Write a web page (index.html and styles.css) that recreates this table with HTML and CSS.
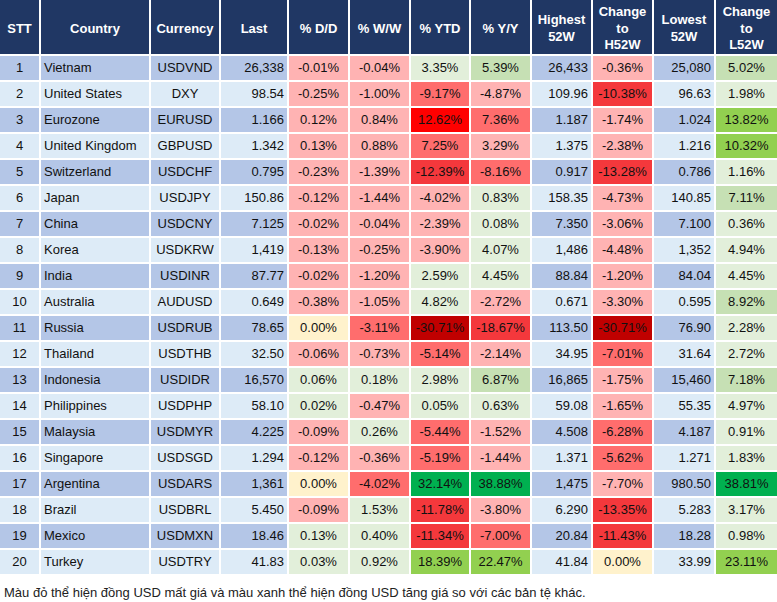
FILE: index.html
```html
<!DOCTYPE html>
<html lang="vi">
<head>
<meta charset="utf-8">
<link rel="stylesheet" href="styles.css">
</head>
<body>
<table class="fx">
<colgroup>
<col class="c-stt"><col class="c-country"><col class="c-cur"><col class="c-last">
<col class="c-dd"><col class="c-ww"><col class="c-ytd"><col class="c-yy">
<col class="c-hi"><col class="c-h52"><col class="c-lo"><col class="c-l52">
</colgroup>
<thead>
<tr>
<th>STT</th><th>Country</th><th>Currency</th><th>Last</th><th>% D/D</th><th>% W/W</th><th>% YTD</th><th>% Y/Y</th><th>Highest<br>52W</th><th>Change<br>to<br>H52W</th><th>Lowest<br>52W</th><th>Change<br>to<br>L52W</th>
</tr>
</thead>
<tbody>
<tr class="odd"><td class="n">1</td><td class="t">Vietnam</td><td class="c">USDVND</td><td class="r">26,338</td><td class="p1">-0.01%</td><td class="p1">-0.04%</td><td class="g1">3.35%</td><td class="g2">5.39%</td><td class="r">26,433</td><td class="p1">-0.36%</td><td class="r">25,080</td><td class="g2">5.02%</td></tr>
<tr class="even"><td class="n">2</td><td class="t">United States</td><td class="c">DXY</td><td class="r">98.54</td><td class="p1">-0.25%</td><td class="p1">-1.00%</td><td class="p2">-9.17%</td><td class="p1">-4.87%</td><td class="r">109.96</td><td class="p3">-10.38%</td><td class="r">96.63</td><td class="g1">1.98%</td></tr>
<tr class="odd"><td class="n">3</td><td class="t">Eurozone</td><td class="c">EURUSD</td><td class="r">1.166</td><td class="p1">0.12%</td><td class="p1">0.84%</td><td class="p4">12.62%</td><td class="p2">7.36%</td><td class="r">1.187</td><td class="p1">-1.74%</td><td class="r">1.024</td><td class="g3">13.82%</td></tr>
<tr class="even"><td class="n">4</td><td class="t">United Kingdom</td><td class="c">GBPUSD</td><td class="r">1.342</td><td class="p1">0.13%</td><td class="p1">0.88%</td><td class="p2">7.25%</td><td class="p1">3.29%</td><td class="r">1.375</td><td class="p1">-2.38%</td><td class="r">1.216</td><td class="g3">10.32%</td></tr>
<tr class="odd"><td class="n">5</td><td class="t">Switzerland</td><td class="c">USDCHF</td><td class="r">0.795</td><td class="p1">-0.23%</td><td class="p1">-1.39%</td><td class="p3">-12.39%</td><td class="p2">-8.16%</td><td class="r">0.917</td><td class="p3">-13.28%</td><td class="r">0.786</td><td class="g1">1.16%</td></tr>
<tr class="even"><td class="n">6</td><td class="t">Japan</td><td class="c">USDJPY</td><td class="r">150.86</td><td class="p1">-0.12%</td><td class="p1">-1.44%</td><td class="p1">-4.02%</td><td class="g1">0.83%</td><td class="r">158.35</td><td class="p1">-4.73%</td><td class="r">140.85</td><td class="g2">7.11%</td></tr>
<tr class="odd"><td class="n">7</td><td class="t">China</td><td class="c">USDCNY</td><td class="r">7.125</td><td class="p1">-0.02%</td><td class="p1">-0.04%</td><td class="p1">-2.39%</td><td class="g1">0.08%</td><td class="r">7.350</td><td class="p1">-3.06%</td><td class="r">7.100</td><td class="g1">0.36%</td></tr>
<tr class="even"><td class="n">8</td><td class="t">Korea</td><td class="c">USDKRW</td><td class="r">1,419</td><td class="p1">-0.13%</td><td class="p1">-0.25%</td><td class="p1">-3.90%</td><td class="g1">4.07%</td><td class="r">1,486</td><td class="p1">-4.48%</td><td class="r">1,352</td><td class="g1">4.94%</td></tr>
<tr class="odd"><td class="n">9</td><td class="t">India</td><td class="c">USDINR</td><td class="r">87.77</td><td class="p1">-0.02%</td><td class="p1">-1.20%</td><td class="g1">2.59%</td><td class="g1">4.45%</td><td class="r">88.84</td><td class="p1">-1.20%</td><td class="r">84.04</td><td class="g1">4.45%</td></tr>
<tr class="even"><td class="n">10</td><td class="t">Australia</td><td class="c">AUDUSD</td><td class="r">0.649</td><td class="p1">-0.38%</td><td class="p1">-1.05%</td><td class="g1">4.82%</td><td class="p1">-2.72%</td><td class="r">0.671</td><td class="p1">-3.30%</td><td class="r">0.595</td><td class="g2">8.92%</td></tr>
<tr class="odd"><td class="n">11</td><td class="t">Russia</td><td class="c">USDRUB</td><td class="r">78.65</td><td class="y">0.00%</td><td class="p2">-3.11%</td><td class="p5">-30.71%</td><td class="p3">-18.67%</td><td class="r">113.50</td><td class="p5">-30.71%</td><td class="r">76.90</td><td class="g1">2.28%</td></tr>
<tr class="even"><td class="n">12</td><td class="t">Thailand</td><td class="c">USDTHB</td><td class="r">32.50</td><td class="p1">-0.06%</td><td class="p1">-0.73%</td><td class="p2">-5.14%</td><td class="p1">-2.14%</td><td class="r">34.95</td><td class="p2">-7.01%</td><td class="r">31.64</td><td class="g1">2.72%</td></tr>
<tr class="odd"><td class="n">13</td><td class="t">Indonesia</td><td class="c">USDIDR</td><td class="r">16,570</td><td class="g1">0.06%</td><td class="g1">0.18%</td><td class="g1">2.98%</td><td class="g2">6.87%</td><td class="r">16,865</td><td class="p1">-1.75%</td><td class="r">15,460</td><td class="g2">7.18%</td></tr>
<tr class="even"><td class="n">14</td><td class="t">Philippines</td><td class="c">USDPHP</td><td class="r">58.10</td><td class="g1">0.02%</td><td class="p1">-0.47%</td><td class="g1">0.05%</td><td class="g1">0.63%</td><td class="r">59.08</td><td class="p1">-1.65%</td><td class="r">55.35</td><td class="g1">4.97%</td></tr>
<tr class="odd"><td class="n">15</td><td class="t">Malaysia</td><td class="c">USDMYR</td><td class="r">4.225</td><td class="p1">-0.09%</td><td class="g1">0.26%</td><td class="p2">-5.44%</td><td class="p1">-1.52%</td><td class="r">4.508</td><td class="p2">-6.28%</td><td class="r">4.187</td><td class="g1">0.91%</td></tr>
<tr class="even"><td class="n">16</td><td class="t">Singapore</td><td class="c">USDSGD</td><td class="r">1.294</td><td class="p1">-0.12%</td><td class="p1">-0.36%</td><td class="p2">-5.19%</td><td class="p1">-1.44%</td><td class="r">1.371</td><td class="p2">-5.62%</td><td class="r">1.271</td><td class="g1">1.83%</td></tr>
<tr class="odd"><td class="n">17</td><td class="t">Argentina</td><td class="c">USDARS</td><td class="r">1,361</td><td class="y">0.00%</td><td class="p2">-4.02%</td><td class="g4">32.14%</td><td class="g4">38.88%</td><td class="r">1,475</td><td class="p1">-7.70%</td><td class="r">980.50</td><td class="g4">38.81%</td></tr>
<tr class="even"><td class="n">18</td><td class="t">Brazil</td><td class="c">USDBRL</td><td class="r">5.450</td><td class="p1">-0.09%</td><td class="g1">1.53%</td><td class="p3">-11.78%</td><td class="p1">-3.80%</td><td class="r">6.290</td><td class="p3">-13.35%</td><td class="r">5.283</td><td class="g1">3.17%</td></tr>
<tr class="odd"><td class="n">19</td><td class="t">Mexico</td><td class="c">USDMXN</td><td class="r">18.46</td><td class="g1">0.13%</td><td class="g1">0.40%</td><td class="p3">-11.34%</td><td class="p2">-7.00%</td><td class="r">20.84</td><td class="p3">-11.43%</td><td class="r">18.28</td><td class="g1">0.98%</td></tr>
<tr class="even"><td class="n">20</td><td class="t">Turkey</td><td class="c">USDTRY</td><td class="r">41.83</td><td class="g1">0.03%</td><td class="g1">0.92%</td><td class="g3">18.39%</td><td class="g3">22.47%</td><td class="r">41.84</td><td class="y">0.00%</td><td class="r">33.99</td><td class="g3">23.11%</td></tr>
</tbody>
</table>
<p class="note">Màu đỏ thể hiện đồng USD mất giá và màu xanh thể hiện đồng USD tăng giá so với các bản tệ khác.</p>
</body>
</html>
```
FILE: styles.css
```css
html, body {
  margin: 0;
  padding: 0;
  background: #ffffff;
}
body {
  font-family: "Liberation Sans", Arial, sans-serif;
  font-size: 13px;
  color: #111111;
}
.fx {
  border-collapse: separate;
  border-spacing: 0;
  table-layout: fixed;
  width: 777px;
}
.c-stt { width: 41px; }
.c-country { width: 110px; }
.c-cur { width: 70px; }
.c-last { width: 68px; }
.c-dd { width: 61px; }
.c-ww { width: 61px; }
.c-ytd { width: 60px; }
.c-yy { width: 61px; }
.c-hi { width: 61px; }
.c-h52 { width: 61px; }
.c-lo { width: 62px; }
.c-l52 { width: 61px; }

.fx th, .fx td {
  border-right: 2px solid #ffffff;
  border-bottom: 2px solid #ffffff;
  padding: 0;
  box-sizing: border-box;
  white-space: nowrap;
  overflow: hidden;
}
.fx th:last-child, .fx td:last-child { border-right: 0; }
.fx th {
  background: #203764;
  color: #ffffff;
  font-weight: bold;
  font-size: 13px;
  line-height: 16.5px;
  height: 55px;
  padding-top: 4px;
  text-align: center;
  vertical-align: middle;
}
.fx td {
  height: 26px;
  text-align: center;
  vertical-align: middle;
  line-height: 15px;
}
.odd td { background: #b4c6e7; }
.even td { background: #ddebf7; }
.fx td.n { text-align: center; }
.fx td.t { text-align: left; padding-left: 3px; }
.fx td.c { text-align: center; }
.fx td.r { text-align: right; padding-right: 3px; }

.fx td.p1 { background: #ffb3b3; }
.fx td.p2 { background: #ff6d6d; }
.fx td.p3 { background: #f4383c; }
.fx td.p4 { background: #ff0000; }
.fx td.p5 { background: #c00000; }
.fx td.g1 { background: #e2efda; }
.fx td.g2 { background: #c6e0b4; }
.fx td.g3 { background: #92d050; }
.fx td.g4 { background: #00b050; }
.fx td.y { background: #fff2cc; }

.note {
  margin: 0;
  padding: 9px 0 0 4px;
  font-size: 13px;
  color: #222222;
  line-height: 15px;
}
```
